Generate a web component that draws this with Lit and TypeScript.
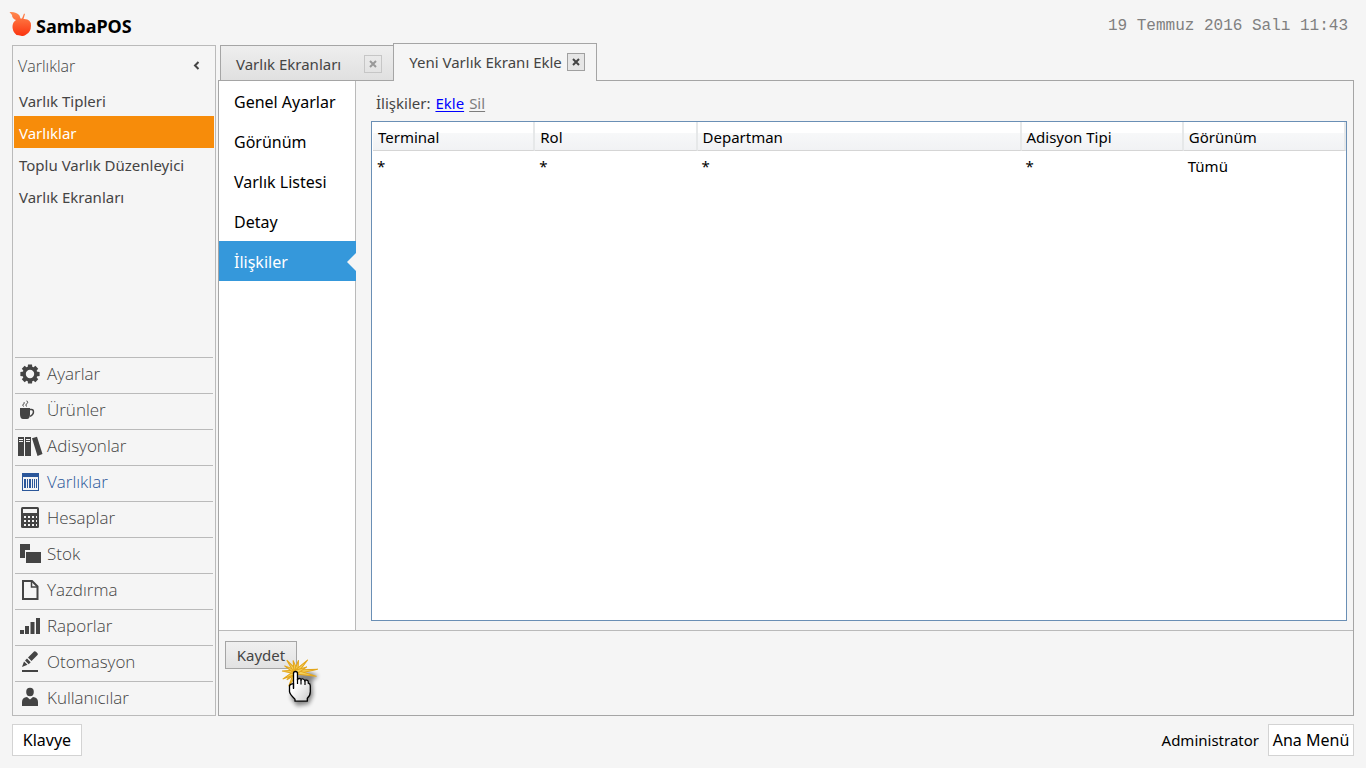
import { LitElement, html, svg, css, type SVGTemplateResult } from "lit";
import { customElement, state } from "lit/decorators.js";
import { classMap } from "lit/directives/class-map.js";

interface Module {
  name: string;
  icon: SVGTemplateResult;
}

const gearTeeth = [0, 45, 90, 135, 180, 225, 270, 315];
const burstRays = [
  [-7, 22], [12, 21], [140, 12], [117, 16],
  [152, 15], [184, 14], [208, 13], [232, 15], [256, 12], [282, 12], [314, 17], [335, 12],
];

const modules: Module[] = [
  {
    name: "Ayarlar",
    icon: svg`<circle cx="14" cy="16" r="5.8" fill="none" stroke="currentColor" stroke-width="3.2"/>
      ${gearTeeth.map((a) => svg`<path transform="rotate(${a} 14 16)" d="M11.6 9.8l.4-3.4h4l.4 3.4z" fill="currentColor"/>`)}`,
  },
  {
    name: "Ürünler",
    icon: svg`<path d="M4 14h10v6q0 5-3 5H7q-3 0-3-5z" fill="currentColor"/>
      <path d="M14 15.5h1.5q2 0 2 2.500t-3.500 4.500" fill="none" stroke="currentColor" stroke-width="1.4"/>
      <path d="M7.500 12.500q-1.500-1.500 0-2.500t.5-1.800M10.500 12.500q-1.500-1.700 .3-2.800t0-3" fill="none" stroke="currentColor" stroke-width="1"/>`,
  },
  {
    name: "Adisyonlar",
    icon: svg`<path d="M2 7h6v19H2zM9 7h6v19H9zM16 8.200l5-1.500 5.500 17.300-5 2z" fill="currentColor"/>
      <path d="M3 9.500h4M3 11.500h4M10 9.500h4M10 11.500h4" stroke="#f5f5f5" stroke-width="1"/>`,
  },
  {
    name: "Varlıklar",
    icon: svg`<rect x="6.5" y="7.5" width="16" height="17" fill="none" stroke="currentColor"/>
      <path d="M6 7h17v4H6zM8 13h2v9H8zM11 13h1v9h-1zM13 13h2v9h-2zM16 13h1v9h-1zM18 13h1v9h-1zM20 13h1v9h-1z" fill="currentColor"/>`,
  },
  {
    name: "Hesaplar",
    icon: svg`<rect x="5" y="5" width="18" height="21" rx="1.5" fill="currentColor"/>
      <path d="M7 7h14v4H7zM8 14h2v2H8zM12 14h2v2h-2zM16 14h2v2h-2zM20 14h1v2h-1zM8 18h2v2H8zM12 18h2v2h-2zM16 18h2v2h-2zM20 18h1v2h-1zM8 22h2v2H8zM12 22h2v2h-2zM16 22h2v2h-2zM20 22h1v2h-1z" fill="#f5f5f5"/>`,
  },
  {
    name: "Stok",
    icon: svg`<path d="M4 6h10v6H9v8H4z" fill="currentColor"/>
      <rect x="10" y="14" width="15" height="11" fill="currentColor"/>`,
  },
  {
    name: "Yazdırma",
    icon: svg`<path d="M7 7h9l5.500 5.500V25H7z" fill="none" stroke="currentColor" stroke-width="2"/>
      <path d="M15.500 7v6h6" fill="none" stroke="currentColor" stroke-width="1.5"/>`,
  },
  {
    name: "Raporlar",
    icon: svg`<path d="M4 20h4v4H4zM9 16h4v8H9zM14.500 12h4v12h-4zM20 8h4v16h-4z" fill="currentColor"/>`,
  },
  {
    name: "Otomasyon",
    icon: svg`<path d="M6 21l2-5.500 3.500 3.300zM9 14.500l2-2 3.700 3.700-2 2zM12 11.500l6-6q1-.8 2 .2l1.500 1.500q.8 1 0 1.800l-6 6z" fill="currentColor"/>
      <path d="M6 24h16v2H6z" fill="currentColor"/>`,
  },
  {
    name: "Kullanıcılar",
    icon: svg`<ellipse cx="14" cy="10" rx="3.8" ry="4.2" fill="currentColor"/>
      <path d="M6 24v-4q0-4.500 5-5l3 2.500 3-2.500q5 .5 5 5v4z" fill="currentColor"/>`,
  },
];

const columns = ["Terminal", "Rol", "Departman", "Adisyon Tipi", "Görünüm"];
const rows = [["*", "*", "*", "*", "Tümü"]];
const entityLinks = ["Varlık Tipleri", "Varlıklar", "Toplu Varlık Düzenleyici", "Varlık Ekranları"];
const sections = ["Genel Ayarlar", "Görünüm", "Varlık Listesi", "Detay", "İlişkiler"];

const closeGlyph = svg`<path d="M1 1l6 6M7 1l-6 6" stroke="currentColor" stroke-width="2"/>`;

@customElement("app-root")
export class AppRoot extends LitElement {
  @state() private entity = "Varlıklar";
  @state() private section = "İlişkiler";
  @state() private module = "Varlıklar";

  static styles = css`
    :host {
      display: grid;
      grid-template-rows: 43px minmax(0, 1fr) 52px;
      height: 100vh;
      box-sizing: border-box;
      padding: 0 12px;
      background: #f5f5f5;
      color: #444;
      font: 15px/20px "Noto Sans", "Open Sans", sans-serif;
    }
    * { box-sizing: border-box; }
    button { font: inherit; color: inherit; padding: 0; cursor: pointer; }
    svg { display: block; flex: none; }
    ul { list-style: none; margin: 0; padding: 0; }
    a { color: inherit; text-decoration: none; }

    .top { display: flex; justify-content: space-between; padding: 10px 6px 0 0; }
    .brand { display: flex; align-items: center; gap: 4px; height: 32px; margin-left: -4px; color: #000; font-weight: 700; font-size: 18px; }
    .brand svg { margin-bottom: 4px; }
    .clock { color: #808080; font: 16px/32px "Liberation Mono", monospace; }

    .main { display: grid; grid-template-columns: 204px minmax(0, 1fr); gap: 2px; }
    .side { display: flex; flex-direction: column; margin-top: 2px; border: 1px solid #bababa; padding: 0 1px; }
    .sidehead { display: flex; justify-content: space-between; align-items: center; height: 38px; padding: 0 10px 0 4px; }
    .sidehead h2 { margin: 2px 0 0; }
    .light, .sidehead h2 { font: 300 17px/24px "Open Sans", "Noto Sans", sans-serif; }
    .sidehead h2 { font-size: 16px; }
    .collapse { border: 0; background: none; color: #444; padding: 4px; }
    .entity { display: block; height: 32px; padding: 1px 5px 0; line-height: 32px; }
    .entity.on { background: #f78c0a; color: #fff; }
    .modules { margin: auto 0 0; padding: 0 1px; }
    .module { display: flex; align-items: flex-start; gap: 3px; height: 36px; border-top: 1px solid #bababa; }
    li:last-child > .module { height: 34px; }
    .module svg { margin-left: 1px; color: #444; }
    .module.on, .module.on svg { color: #2b579a; }
    .module:not(.on) { color: #444; }
    .modname { margin-top: 4px; }

    .work { display: grid; grid-template-rows: 37px minmax(0, 1fr); min-width: 0; }
    .tabs { display: flex; align-items: flex-end; padding-left: 2px; }
    .tab { display: flex; align-items: center; height: 35px; border: 1px solid #a5a5a5; border-bottom: 0; background: linear-gradient(#eee, #e0e0e0); padding: 2px 11px 0 15px; gap: 23px; }
    .tab.first { border-right: 0; }
    .tab.on { height: 38px; margin-bottom: -1px; z-index: 1; background: #f5f5f5; gap: 5px; padding: 0 11px 1px 15px; }
    .tabname { border: 0; background: none; white-space: nowrap; }
    .close { display: grid; place-items: center; width: 18px; height: 18px; border: 1px solid #c6c6c6; background: none; color: #999; }
    .tab.on .close { border-color: #a0a0a0; background: #e6e6e6; color: #444; }

    .panel { display: grid; grid-template-rows: minmax(0, 1fr) 85px; border: 1px solid #a5a5a5; }
    .body { display: grid; grid-template-columns: 137px minmax(0, 1fr); min-height: 0; }
    .sections { background: #fff; border-right: 1px solid #bababa; font-size: 16px; color: #000; }
    .section { display: flex; align-items: center; justify-content: space-between; width: 137px; height: 40px; padding: 1px 0 0 15px; }
    .section.on { background: #3598db; color: #fff; }
    .detail { display: flex; flex-direction: column; padding: 10px 6px 9px 15px; min-width: 0; }
    .tools { display: flex; gap: 5px; height: 24px; margin-bottom: 6px; align-items: center; padding-left: 5px; }
    .tools a { text-decoration: underline; text-underline-offset: 2px; }
    .add { color: #00f; }
    .del { color: #7d7d7d; }
    .frame { flex: 1; border: 1px solid #6a8fb5; padding-left: 1px; background: #fff; color: #000; }
    table { width: 100%; border-collapse: separate; border-spacing: 0; table-layout: fixed; }
    th { height: 29px; padding: 1px 5px 0; font-weight: 400; text-align: left; border-bottom: 1px solid #d5d5d5; border-right: 2px solid #e6e8e9; background: linear-gradient(#fff 0 38%, #f7f8f9 40%, #f1f2f4); }
    th.wide { width: 33.3%; }
    td { height: 30px; padding: 0 4px; }

    .actions { border-top: 1px solid #bababa; padding: 10px 6px; }
    .savebox { position: relative; display: inline-block; }
    .save { display: block; width: 72px; height: 28px; border: 1px solid #a5a5a5; background: linear-gradient(#f0f0f0, #e2e2e2); }
    .pointer { position: absolute; left: 54px; top: 13px; pointer-events: none; }

    .foot { display: flex; align-items: center; gap: 9px; color: #000; padding-bottom: 4px; }
    .foot button { height: 32px; border: 1px solid #d3d3d3; background: #fff; font-size: 16px; }
    .keyboard { width: 70px; margin-right: auto; }
    .home { width: 86px; }
  `;

  render() {
    return html`
      <header class="top">
        <div class="brand">
          <svg width="24" height="26" viewBox="0 0 24 26" aria-hidden="true">
            <defs>
              <linearGradient id="fruit" x1="0" y1="0" x2="0" y2="1">
                <stop offset="0" stop-color="#ff8a50" />
                <stop offset="1" stop-color="#fb3410" />
              </linearGradient>
            </defs>
            <path fill="url(#fruit)" d="M1.500 1q7-.5 10 3.500l1 3h1.500l2-5 1 .5-1.500 5q7.500-.5 7.500 6.500T17.500 24q-2 1.500-4.500 .8T8.500 24Q4 20 4.500 15q.3-4 3.500-6Q4 7.500 4 4z" />
          </svg>
          <span>SambaPOS</span>
        </div>
        <time class="clock" datetime="2016-07-19T11:43">19 Temmuz 2016 Salı 11:43</time>
      </header>

      <main class="main">
        <nav class="side">
          <div class="sidehead">
            <h2>Varlıklar</h2>
            <button class="collapse" aria-label="Daralt">
              <svg width="7" height="9" viewBox="0 0 7 9"><path d="M5.500 1L2 4.500 5.500 8" fill="none" stroke="currentColor" stroke-width="2" /></svg>
            </button>
          </div>
          <ul>
            ${entityLinks.map((name) => html`<li>
              <a href="#" class=${classMap({ entity: true, on: name === this.entity })}
                @click=${(e: Event) => { e.preventDefault(); this.entity = name; }}>${name}</a>
            </li>`)}
          </ul>
          <ul class="modules">
            ${modules.map((m) => html`<li>
              <a href="#" class=${classMap({ module: true, light: true, on: m.name === this.module })}
                @click=${(e: Event) => { e.preventDefault(); this.module = m.name; }}>
                <svg width="28" height="30" viewBox="0 0 28 30" aria-hidden="true">${m.icon}</svg>
                <span class="modname">${m.name}</span>
              </a>
            </li>`)}
          </ul>
        </nav>

        <div class="work">
          <div class="tabs">
            <div class="tab first">
              <button class="tabname">Varlık Ekranları</button>
              <button class="close" aria-label="Kapat"><svg width="8" height="8" viewBox="0 0 8 8">${closeGlyph}</svg></button>
            </div>
            <div class="tab on">
              <button class="tabname">Yeni Varlık Ekranı Ekle</button>
              <button class="close" aria-label="Kapat"><svg width="8" height="8" viewBox="0 0 8 8">${closeGlyph}</svg></button>
            </div>
          </div>

          <div class="panel">
            <div class="body">
              <ul class="sections">
                ${sections.map((name) => html`<li>
                  <a href="#" class=${classMap({ section: true, on: name === this.section })}
                    @click=${(e: Event) => { e.preventDefault(); this.section = name; }}>
                    ${name}
                    ${name === this.section
                      ? html`<svg width="9" height="18" viewBox="0 0 9 18" aria-hidden="true"><path d="M9 0L0 9l9 9z" fill="#f5f5f5" /></svg>`
                      : null}
                  </a>
                </li>`)}
              </ul>
              <section class="detail">
                <div class="tools">
                  <span>İlişkiler:</span>
                  <a class="add" href="#">Ekle</a>
                  <a class="del" href="#">Sil</a>
                </div>
                <div class="frame">
                  <table>
                    <thead>
                      <tr>${columns.map((c) => html`<th class=${classMap({ wide: c === "Departman" })} scope="col">${c}</th>`)}</tr>
                    </thead>
                    <tbody>
                      ${rows.map((r) => html`<tr>${r.map((v) => html`<td>${v}</td>`)}</tr>`)}
                    </tbody>
                  </table>
                </div>
              </section>
            </div>
            <div class="actions">
              <div class="savebox">
                <button class="save">Kaydet</button>
                <svg class="pointer" width="60" height="60" viewBox="0 0 60 60" aria-hidden="true">
                  <defs>
                    <filter id="soft" x="-40%" y="-40%" width="180%" height="180%"><feGaussianBlur stdDeviation="2" /></filter>
                    <linearGradient id="glove" x1="0" y1="0" x2="1" y2="1">
                      <stop offset="0.4" stop-color="#fff" />
                      <stop offset="1" stop-color="#c8c8c8" />
                    </linearGradient>
                  </defs>
                  <path d="M17 20l14-2 8 4-6 5 1 14-4 9-12 2-6-8z" fill="#000" opacity="0.45" filter="url(#soft)" />
                  ${burstRays.map(([a, r]) => svg`<path transform="rotate(${a} 17 18)" d="M17 16L${17 + r} 18 17 20z" fill="#f3d05a" stroke="#e3a51a" stroke-width="1"/>`)}
                  <path d="M14.500 34V19.500q0-2 2-2t2 2V26q0-1.500 1.800-1.500T22 26q.3-1.500 2-1t1.800 2q.3-1.300 2-.8t1.500 2v1q2 .5 2 2.500v6q0 4-3 6.500v3H16v-2q-5-4.500-5.500-7.500V32q.5-2.500 4-2z"
                    fill="url(#glove)" stroke="#000" stroke-width="1.3" stroke-linejoin="round" />
                  <path d="M14.500 29v6M18.500 25v5M22 26v4.500M26 27v4" stroke="#000" stroke-width="1.2" />
                </svg>
              </div>
            </div>
          </div>
        </div>
      </main>

      <footer class="foot">
        <button class="keyboard">Klavye</button>
        <span>Administrator</span>
        <button class="home">Ana Menü</button>
      </footer>
    `;
  }
}
